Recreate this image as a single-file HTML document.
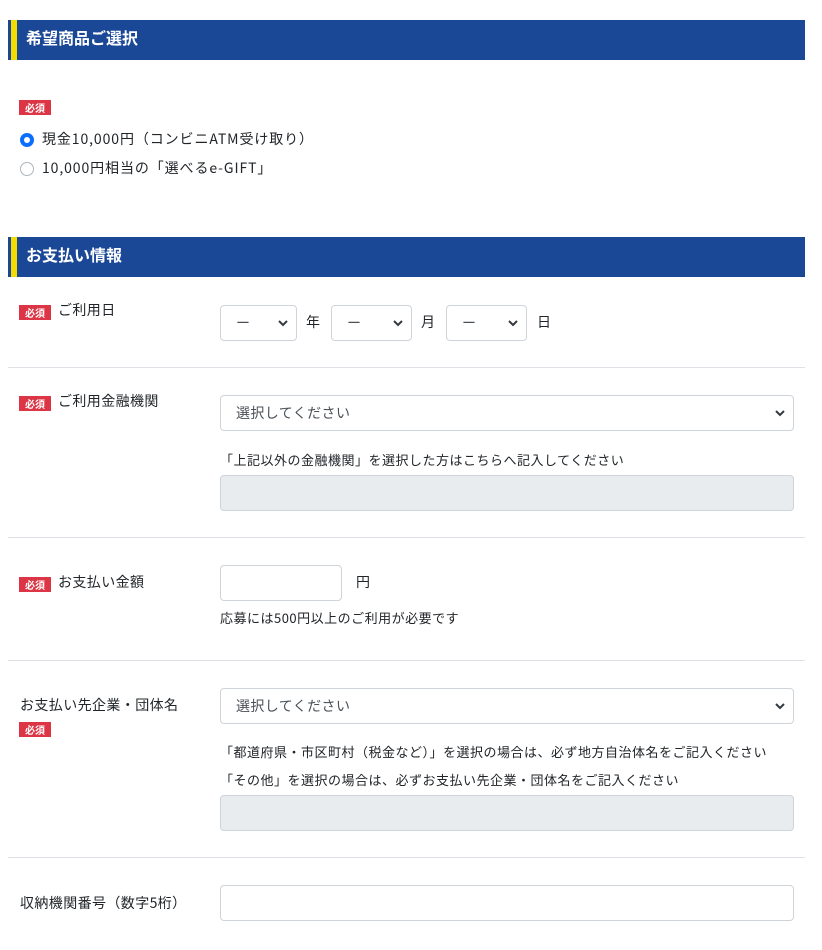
<!DOCTYPE html>
<html><head><meta charset="utf-8"><style>
*{box-sizing:border-box;margin:0;padding:0}
body{width:822px;height:950px;background:#fff;position:relative;overflow:hidden;font-family:"Noto Sans CJK JP","Liberation Sans",sans-serif;color:#212529;font-size:14px;letter-spacing:0.4px}
.a{position:absolute;white-space:nowrap;line-height:1}
.h{position:absolute;left:8px;width:797px;height:40px;background:#1b4896;border-left:3px solid #1b4896}
.h::before{content:"";position:absolute;left:0;top:0;width:6px;height:40px;background:#f5dc00}
.h span{position:absolute;left:15px;top:8px;color:#fff;font-weight:bold;font-size:16px;line-height:18px;letter-spacing:0}
.b{position:absolute;left:19px;width:32px;height:15px;background:#dc3545;color:#fff;font-size:10px;font-weight:bold;text-align:center;line-height:15px;letter-spacing:0}
.s{position:absolute;border:1px solid #ced4da;border-radius:4px;background:#fff;height:36px}
.s svg{position:absolute;right:8px;top:13px}
.s span{position:absolute;left:15px;top:9px;font-size:14px;line-height:16px;color:#495057}
.d{position:absolute;border:1px solid #ced4da;border-radius:4px;background:#e9ecef;height:36px;left:220px;width:574px}
.hr{position:absolute;left:8px;width:797px;height:1px;background:#dee2e6}
.n{position:absolute;font-size:13px;line-height:14px;white-space:nowrap;letter-spacing:0.5px}
</style></head><body>
<div class="h" style="top:20px"><span>希望商品ご選択</span></div>
<div class="b" style="top:100px">必須</div>
<div class="a" style="left:20px;top:133px;width:14px;height:14px;border-radius:50%;background:#0d6efd"><div style="position:absolute;left:4px;top:4px;width:6px;height:6px;border-radius:50%;background:#fff"></div></div>
<div class="a" style="left:42px;top:132px;letter-spacing:0.9px">現金10,000円（コンビニATM受け取り）</div>
<div class="a" style="left:20px;top:162px;width:14px;height:14px;border-radius:50%;border:1px solid #adb5bd"></div>
<div class="a" style="left:42px;top:161px;letter-spacing:0.9px">10,000円相当の「選べるe-GIFT」</div>

<div class="h" style="top:237px"><span>お支払い情報</span></div>
<div class="b" style="top:305px">必須</div>
<div class="a" style="left:58px;top:303px">ご利用日</div>
<div class="s" style="left:220px;top:305px;width:77px"><span>ー</span><svg width="10" height="8" viewBox="0 0 10 8"><path d="M1 2l4 4 4-4" fill="none" stroke="#343a40" stroke-width="2"/></svg></div>
<div class="a" style="left:306px;top:315px">年</div>
<div class="s" style="left:331px;top:305px;width:81px"><span>ー</span><svg width="10" height="8" viewBox="0 0 10 8"><path d="M1 2l4 4 4-4" fill="none" stroke="#343a40" stroke-width="2"/></svg></div>
<div class="a" style="left:421px;top:315px">月</div>
<div class="s" style="left:446px;top:305px;width:81px"><span>ー</span><svg width="10" height="8" viewBox="0 0 10 8"><path d="M1 2l4 4 4-4" fill="none" stroke="#343a40" stroke-width="2"/></svg></div>
<div class="a" style="left:537px;top:315px">日</div>
<div class="hr" style="top:367px"></div>

<div class="b" style="top:396px">必須</div>
<div class="a" style="left:58px;top:394px">ご利用金融機関</div>
<div class="s" style="left:220px;top:395px;width:574px"><span>選択してください</span><svg width="10" height="8" viewBox="0 0 10 8"><path d="M1 2l4 4 4-4" fill="none" stroke="#343a40" stroke-width="2"/></svg></div>
<div class="n" style="left:220px;top:453px">「上記以外の金融機関」を選択した方はこちらへ記入してください</div>
<div class="d" style="top:475px"></div>
<div class="hr" style="top:537px"></div>

<div class="b" style="top:577px">必須</div>
<div class="a" style="left:58px;top:575px">お支払い金額</div>
<div class="s" style="left:220px;top:565px;width:122px"></div>
<div class="a" style="left:356px;top:575px">円</div>
<div class="n" style="left:220px;top:611px">応募には500円以上のご利用が必要です</div>
<div class="hr" style="top:660px"></div>

<div class="a" style="left:20px;top:698px">お支払い先企業・団体名</div>
<div class="b" style="top:722px">必須</div>
<div class="s" style="left:220px;top:688px;width:574px"><span>選択してください</span><svg width="10" height="8" viewBox="0 0 10 8"><path d="M1 2l4 4 4-4" fill="none" stroke="#343a40" stroke-width="2"/></svg></div>
<div class="n" style="left:220px;top:745px">「都道府県・市区町村（税金など）」を選択の場合は、必ず地方自治体名をご記入ください</div>
<div class="n" style="left:220px;top:773px">「その他」を選択の場合は、必ずお支払い先企業・団体名をご記入ください</div>
<div class="d" style="top:795px"></div>
<div class="hr" style="top:857px"></div>

<div class="a" style="left:20px;top:896px">収納機関番号（数字5桁）</div>
<div class="s" style="left:220px;top:885px;width:574px"></div>
</body></html>
